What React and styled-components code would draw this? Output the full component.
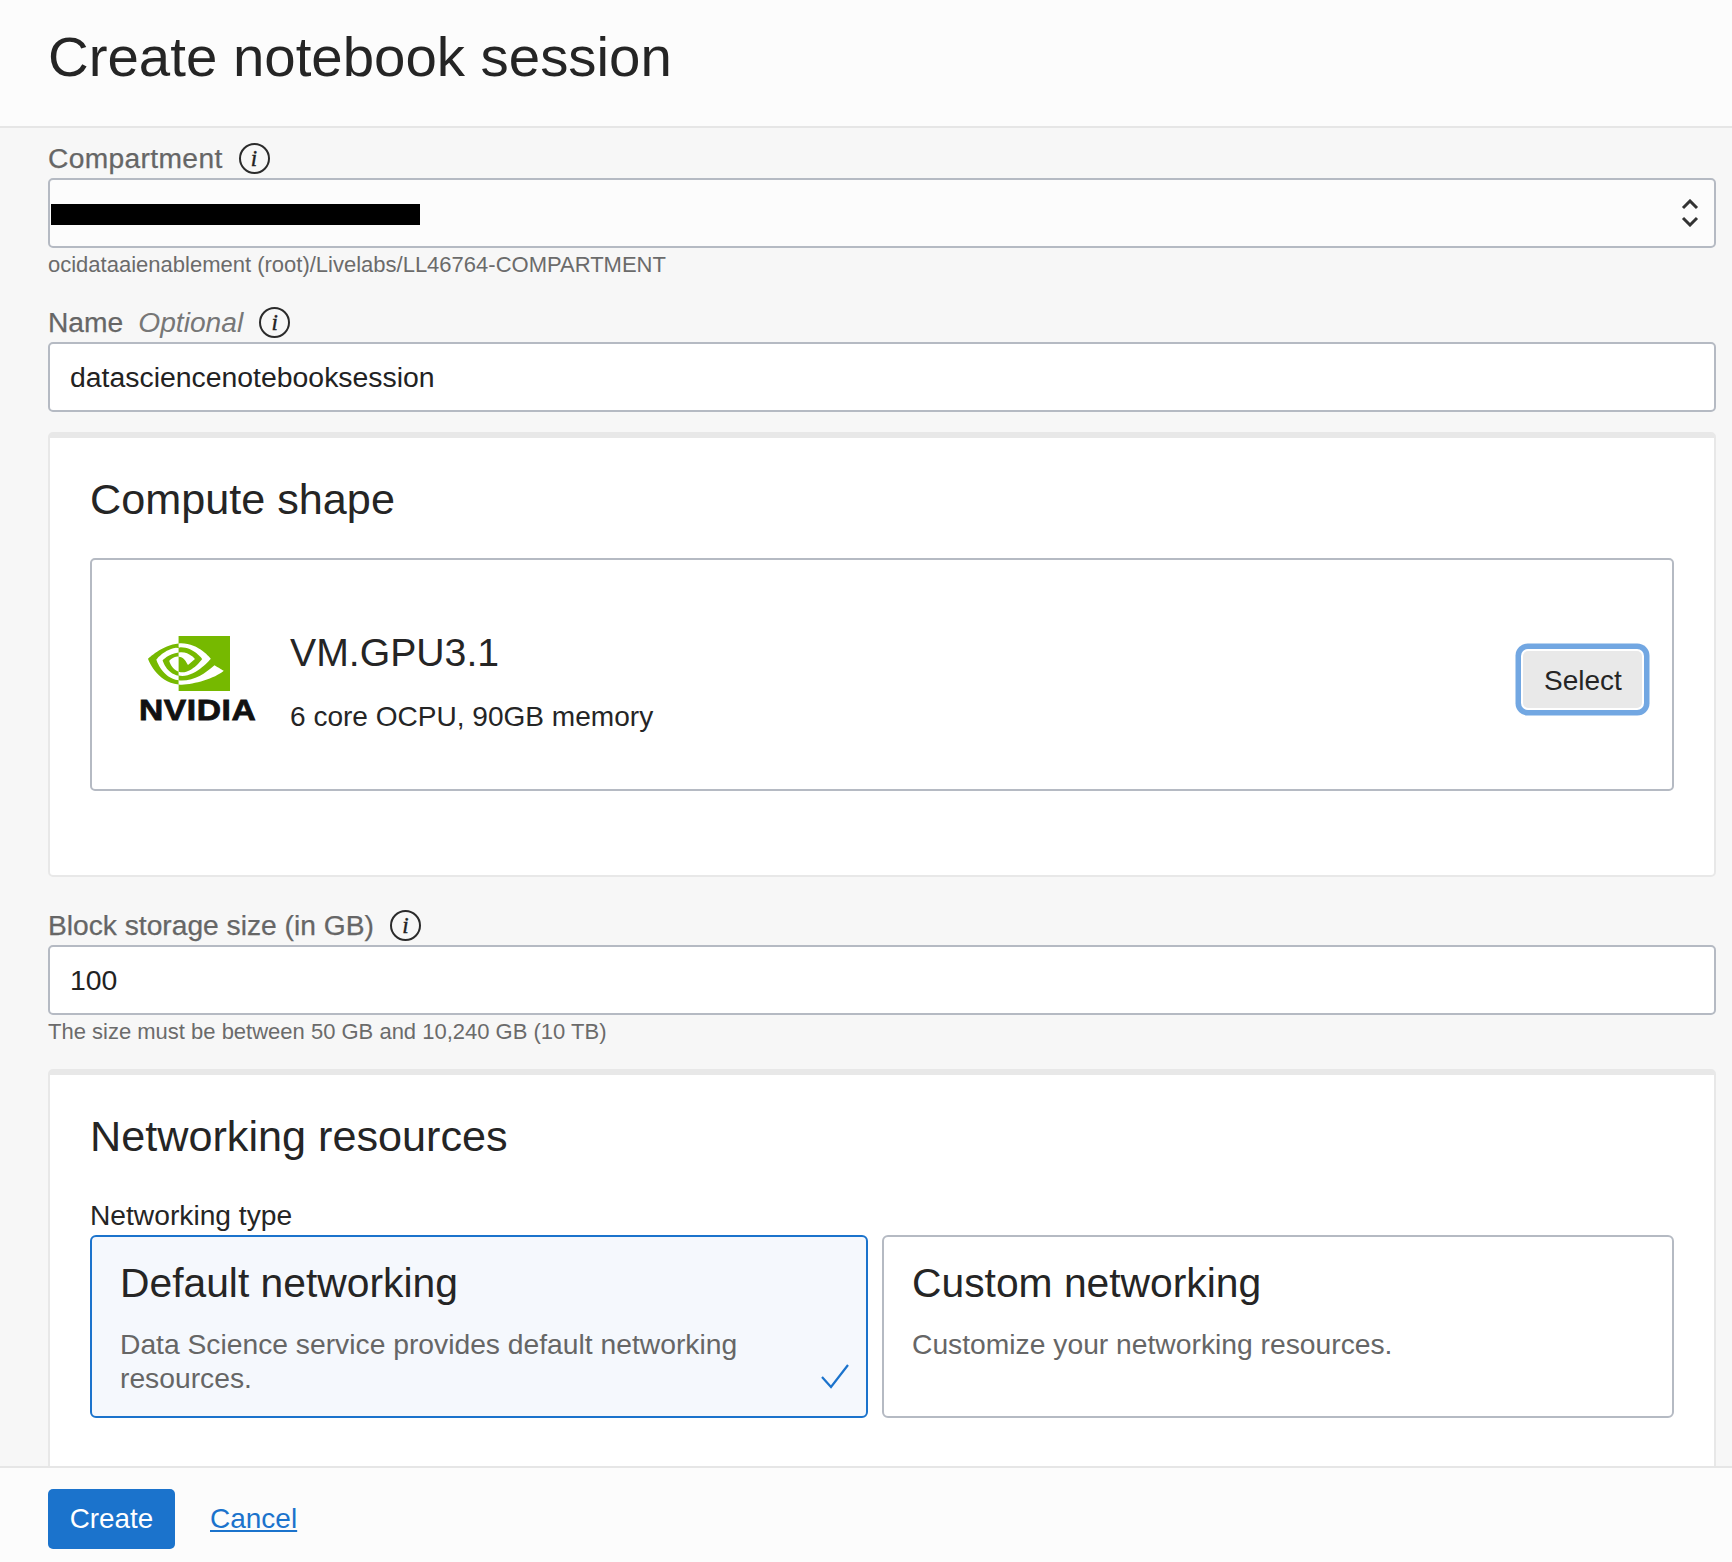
import React from 'react';
import styled, { createGlobalStyle } from 'styled-components';

const GlobalStyle = createGlobalStyle`
  html, body { margin: 0; padding: 0; }
  body {
    font-family: "Liberation Sans", Arial, sans-serif;
    color: #222;
    background: #f7f7f7;
  }
`;

const Page = styled.div`
  width: 1732px;
  height: 1562px;
  display: flex;
  flex-direction: column;
  overflow: hidden;
`;

const Header = styled.header`
  height: 126px;
  flex: none;
  box-sizing: content-box;
  background: #fcfcfc;
  border-bottom: 2px solid #e6e6e6;
  padding-left: 48px;
  display: flex;
  align-items: center;
`;

const Title = styled.h1`
  margin: 0 0 13px;
  font-size: 56.4px;
  font-weight: 400;
  line-height: 64px;
  color: #252525;
`;

const Body = styled.main`
  flex: 1;
  min-height: 0;
  overflow: hidden;
  padding: 14px 16px 0 48px;
`;

const Label = styled.div`
  height: 32px;
  margin-top: ${({ $top }) => $top || 0}px;
  margin-bottom: 4px;
  display: flex;
  align-items: center;
  font-size: 28.2px;
  line-height: 32px;
  letter-spacing: ${({ $tracking }) => $tracking || 0}px;
  color: #666;
  -webkit-text-stroke: 0.25px #666;
`;

const Optional = styled.em`
  margin-left: 15px;
  font-style: italic;
  color: #777;
  -webkit-text-stroke: 0;
`;

const InfoIcon = styled.span`
  box-sizing: border-box;
  width: 31px;
  height: 31px;
  margin-left: 16px;
  border: 2px solid #2b2b2b;
  border-radius: 50%;
  display: flex;
  align-items: center;
  justify-content: center;
  font-family: "Liberation Serif", serif;
  font-style: italic;
  font-size: 23px;
  line-height: 1;
  color: #222;
  -webkit-text-stroke: 0.4px #222;
`;

const Control = styled.div`
  box-sizing: border-box;
  height: 70px;
  display: flex;
  align-items: center;
  justify-content: space-between;
  padding: ${({ $select }) => ($select ? '0 15px 0 1px' : '1px 20px 0')};
  background: ${({ $select }) => ($select ? '#fcfcfc' : '#fff')};
  border: 2px solid #b5bac3;
  border-radius: 5px;
  font-size: 28.4px;
  color: #222;
`;

const Redaction = styled.span`
  display: block;
  width: 369px;
  height: 21px;
  margin-top: 2px;
  background: #000;
`;

const Help = styled.div`
  margin-top: 5px;
  font-size: 22px;
  line-height: 24px;
  color: #6b6b6b;
`;

const Section = styled.section`
  box-sizing: border-box;
  margin-top: ${({ $top }) => $top}px;
  min-height: ${({ $min }) => $min}px;
  padding: 37px 40px 0;
  background: #fff;
  border: 2px solid #e8e8e8;
  border-top-width: 6px;
  border-radius: 5px;
`;

const SectionTitle = styled.h2`
  margin: 0;
  font-size: 43.2px;
  font-weight: 400;
  line-height: 48px;
  color: #252525;
`;

const ShapeCard = styled.div`
  box-sizing: border-box;
  height: 233px;
  margin-top: 35px;
  padding: 10px 30px 0 47px;
  display: flex;
  align-items: center;
  border: 2px solid #b5bac3;
  border-radius: 5px;
`;

const Logo = styled.div`
  width: 116px;
  flex: none;
  margin-right: 35px;
`;

const LogoMark = styled.svg`
  display: block;
  width: 82px;
  height: 55px;
  margin: 2px 0 0 9px;
  fill: #76b900;
`;

const LogoWord = styled.div`
  margin-top: 4px;
  font-size: 30px;
  font-weight: 700;
  line-height: 30px;
  letter-spacing: 0.5px;
  white-space: nowrap;
  color: #111;
  -webkit-text-stroke: 0.8px #111;
  transform: scaleX(1.12);
  transform-origin: left center;
`;

const ShapeInfo = styled.div`
  flex: 1;
  padding-top: 3px;
`;

const ShapeName = styled.div`
  font-size: 39.2px;
  line-height: 48px;
  color: #252525;
`;

const ShapeSpec = styled.div`
  margin-top: 23px;
  font-size: 28.05px;
  line-height: 34px;
  color: #252525;
`;

const SelectButton = styled.button`
  width: 119px;
  height: 57px;
  padding: 2px 0 0 1px;
  background: #e9e9e9;
  border: 0;
  border-radius: 5px;
  box-shadow: 0 0 0 2px #fff, 0 0 0 7.5px #72a7e2;
  font: inherit;
  font-size: 28px;
  color: #252525;
`;

const TypeLabel = styled.div`
  margin-top: 40px;
  margin-bottom: 5px;
  font-size: 28.2px;
  line-height: 30px;
  color: #252525;
`;

const NetworkGrid = styled.div`
  display: grid;
  grid-template-columns: 778px 792px;
  gap: 14px;
`;

const NetworkCard = styled.div`
  position: relative;
  box-sizing: border-box;
  height: 183px;
  padding: 22px 28px 0;
  background: ${({ $active }) => ($active ? '#f5f8fd' : '#fff')};
  border: 2px solid ${({ $active }) => ($active ? '#1b73cc' : '#b5bac3')};
  border-radius: 6px;
`;

const NetworkTitle = styled.div`
  font-size: 40.8px;
  line-height: 48px;
  color: #252525;
`;

const NetworkText = styled.div`
  margin-top: 20px;
  font-size: 28.25px;
  line-height: 34px;
  color: #666;
`;

const CheckMark = styled.svg`
  position: absolute;
  right: 17px;
  bottom: 27px;
  width: 28px;
  height: 25px;
  fill: none;
  stroke: #1b73cc;
  stroke-width: 2.2;
`;

const Footer = styled.footer`
  height: 86px;
  flex: none;
  box-sizing: content-box;
  padding: 8px 0 0 48px;
  display: flex;
  align-items: center;
  background: #fcfcfc;
  border-top: 2px solid #e6e6e6;
`;

const CreateButton = styled.button`
  width: 127px;
  height: 60px;
  padding: 0;
  background: #1b73cc;
  border: 0;
  border-radius: 5px;
  font: inherit;
  font-size: 27.8px;
  color: #fff;
`;

const CancelLink = styled.a`
  margin-left: 35px;
  font-size: 28px;
  color: #1b73cc;
  text-decoration: underline;
`;

const Info = () => <InfoIcon>i</InfoIcon>;

const Chevrons = () => (
  <svg width="18" height="28" viewBox="0 0 18 28" fill="none" stroke="#333" strokeWidth="3">
    <path d="M2 9l7-7 7 7" />
    <path d="M2 19l7 7 7-7" />
  </svg>
);

const App = () => (
  <>
    <GlobalStyle />
    <Page>
      <Header>
        <Title>Create notebook session</Title>
      </Header>
      <Body>
        <Label $tracking={0.35}>Compartment<Info /></Label>
        <Control $select>
          <Redaction />
          <Chevrons />
        </Control>
        <Help>ocidataaienablement (root)/Livelabs/LL46764-COMPARTMENT</Help>

        <Label $top={29}>Name<Optional>Optional</Optional><Info /></Label>
        <Control>datasciencenotebooksession</Control>

        <Section $top={20} $min={445}>
          <SectionTitle>Compute shape</SectionTitle>
          <ShapeCard>
            <Logo>
              <LogoMark viewBox="0 4.06 24 15.9" preserveAspectRatio="none">
                <path d="M8.948 8.798v-1.43a6.7 6.7 0 0 1 .424-.018c3.922-.124 6.493 3.374 6.493 3.374s-2.774 3.851-5.75 3.851c-.398 0-.787-.062-1.158-.185v-4.346c1.528.185 1.837.857 2.747 2.385l2.04-1.714s-1.492-1.952-4-1.952a6.016 6.016 0 0 0-.796.035m0-4.735v2.138l.424-.027c5.45-.185 9.01 4.47 9.01 4.47s-4.08 4.964-8.33 4.964c-.37 0-.733-.035-1.095-.097v1.325c.3.035.61.062.91.062 3.957 0 6.82-2.023 9.593-4.408.459.371 2.34 1.263 2.73 1.652-2.633 2.208-8.772 3.984-12.253 3.984-.335 0-.653-.018-.971-.053v1.864H24V4.063zm0 10.326v1.131c-3.657-.654-4.673-4.46-4.673-4.46s1.758-1.944 4.673-2.262v1.237H8.94c-1.528-.186-2.73 1.245-2.73 1.245s.68 2.412 2.739 3.11M2.456 10.9s2.164-3.197 6.5-3.533V6.201C4.153 6.59 0 10.653 0 10.653s2.35 6.802 8.948 7.42v-1.237c-4.84-.6-6.492-5.936-6.492-5.936z" />
              </LogoMark>
              <LogoWord>NVIDIA</LogoWord>
            </Logo>
            <ShapeInfo>
              <ShapeName>VM.GPU3.1</ShapeName>
              <ShapeSpec>6 core OCPU, 90GB memory</ShapeSpec>
            </ShapeInfo>
            <SelectButton>Select</SelectButton>
          </ShapeCard>
        </Section>

        <Label $top={32}>Block storage size (in GB)<Info /></Label>
        <Control>100</Control>
        <Help>The size must be between 50 GB and 10,240 GB (10 TB)</Help>

        <Section $top={25} $min={500}>
          <SectionTitle>Networking resources</SectionTitle>
          <TypeLabel>Networking type</TypeLabel>
          <NetworkGrid>
            <NetworkCard $active>
              <NetworkTitle>Default networking</NetworkTitle>
              <NetworkText>Data Science service provides default networking resources.</NetworkText>
              <CheckMark viewBox="0 0 28 25">
                <path d="M1 13l9 10L27 1" />
              </CheckMark>
            </NetworkCard>
            <NetworkCard>
              <NetworkTitle>Custom networking</NetworkTitle>
              <NetworkText>Customize your networking resources.</NetworkText>
            </NetworkCard>
          </NetworkGrid>
        </Section>
      </Body>
      <Footer>
        <CreateButton>Create</CreateButton>
        <CancelLink href="#">Cancel</CancelLink>
      </Footer>
    </Page>
  </>
);

export default App;
